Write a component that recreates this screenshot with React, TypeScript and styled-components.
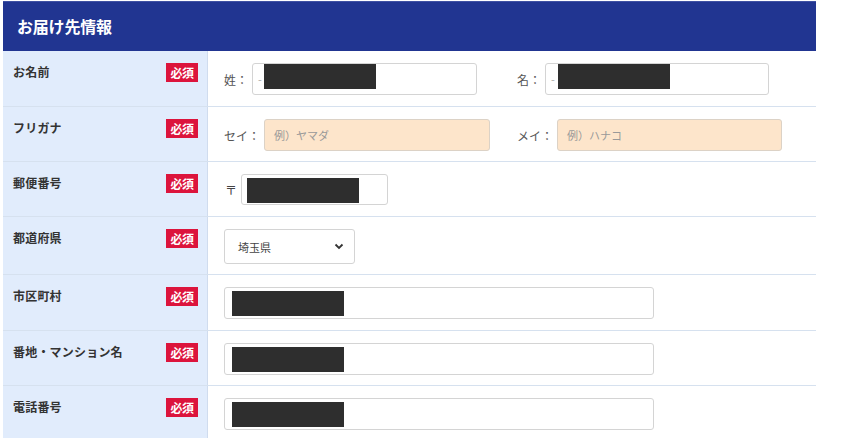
import * as React from 'react'
import styled, { createGlobalStyle } from 'styled-components'

const GlobalStyle = createGlobalStyle`
	body {
		margin: 0;
		background: #fff;
		font-family: 'Noto Sans CJK JP', 'Noto Sans', sans-serif;
		color: #333;
	}
`

type Row = {
	label: string
	height: number
	content: React.ReactNode
}

const Redacted = ({ left, top }: { left: number; top: number }) => (
	<RedactBox style={{ left, top }} />
)

function buildRows(): Row[] {
	return [
		{
			label: 'お名前',
			height: 56,
			content: (
				<>
					<Group>
						<FieldLabel>姓：</FieldLabel>
						<Field $width={225} $height={32}>
							<Ghost>-</Ghost>
							<Redacted left={11} top={0} />
						</Field>
					</Group>
					<Group>
						<FieldLabel>名：</FieldLabel>
						<Field $width={224} $height={32}>
							<Ghost>-</Ghost>
							<Redacted left={12} top={0} />
						</Field>
					</Group>
				</>
			),
		},
		{
			label: 'フリガナ',
			height: 55,
			content: (
				<>
					<Group>
						<FieldLabel>セイ：</FieldLabel>
						<Field $width={226} $height={32} $peach>
							<Placeholder>例）ヤマダ</Placeholder>
						</Field>
					</Group>
					<Group>
						<FieldLabel>メイ：</FieldLabel>
						<Field $width={225} $height={32} $peach>
							<Placeholder>例）ハナコ</Placeholder>
						</Field>
					</Group>
				</>
			),
		},
		{
			label: '郵便番号',
			height: 55,
			content: (
				<Group>
					<Postal>〒</Postal>
					<Field $width={147} $height={31}>
						<Redacted left={5} top={3} />
					</Field>
				</Group>
			),
		},
		{
			label: '都道府県',
			height: 58,
			content: (
				<Select>
					<span>埼玉県</span>
					<svg width="10" height="7" viewBox="0 0 10 7">
						<path d="M1.5 1.5 L5 5 L8.5 1.5" fill="none" stroke="#333" strokeWidth="1.8" />
					</svg>
				</Select>
			),
		},
		{
			label: '市区町村',
			height: 56,
			content: (
				<Field $width={430} $height={32}>
					<Redacted left={7} top={3} />
				</Field>
			),
		},
		{
			label: '番地・マンション名',
			height: 55,
			content: (
				<Field $width={430} $height={32}>
					<Redacted left={7} top={3} />
				</Field>
			),
		},
		{
			label: '電話番号',
			height: 56,
			content: (
				<Field $width={430} $height={32}>
					<Redacted left={7} top={3} />
				</Field>
			),
		},
	]
}

export default function App() {
	const rows = buildRows()
	return (
		<>
			<GlobalStyle />
			<Page>
				<Section>
					<Header>お届け先情報</Header>
					{rows.map((row) => (
						<FormRow key={row.label} $height={row.height}>
							<LabelCell>
								<LabelText>{row.label}</LabelText>
								<Badge>必須</Badge>
							</LabelCell>
							<InputCell>{row.content}</InputCell>
						</FormRow>
					))}
				</Section>
			</Page>
		</>
	)
}

const Page = styled.div`
	padding: 1px 0 0 3px;
	width: 856px;
	height: 437px;
	overflow: hidden;
`

const Section = styled.section`
	width: 813px;
`

const Header = styled.h2`
	margin: 0;
	height: 50px;
	padding: 0 0 2px 14px;
	display: flex;
	align-items: center;
	background: #213591;
	border-top: 1px solid #3f51a3;
	box-sizing: border-box;
	color: #fff;
	font-size: 16px;
	font-weight: 700;
	letter-spacing: -0.2px;
`

const FormRow = styled.div<{ $height: number }>`
	display: flex;
	height: ${(p) => p.$height}px;
	border-bottom: 1px solid #d6e1ef;
	box-sizing: border-box;
`

const LabelCell = styled.div`
	width: 205px;
	flex-shrink: 0;
	box-sizing: border-box;
	display: flex;
	justify-content: space-between;
	align-items: flex-start;
	padding: 12px 9px 0 10px;
	background: #e1ecfc;
	border-right: 1px solid #d0dcee;
`

const LabelText = styled.span`
	font-size: 12px;
	font-weight: 700;
	line-height: 17px;
	letter-spacing: 0.2px;
	color: #333;
`

const Badge = styled.span`
	width: 32px;
	height: 19px;
	display: flex;
	align-items: center;
	justify-content: center;
	background: #dc143c;
	color: #fff;
	font-size: 12px;
	font-weight: 700;
	letter-spacing: -0.5px;
`

const InputCell = styled.div`
	flex: 1;
	display: flex;
	align-items: flex-start;
	padding: 12px 0 0 16px;
`

const Group = styled.div`
	width: 293px;
	display: flex;
	align-items: center;
`

const FieldLabel = styled.span`
	font-size: 12px;
	color: #555;
	margin-right: 4px;
`

const Postal = styled.span`
	font-size: 12px;
	color: #444;
	margin: 0 4px 0 1px;
`

const Field = styled.div<{ $width: number; $height: number; $peach?: boolean }>`
	position: relative;
	width: ${(p) => p.$width}px;
	height: ${(p) => p.$height}px;
	box-sizing: border-box;
	display: flex;
	align-items: center;
	padding-left: 9px;
	background: ${(p) => (p.$peach ? '#fde5cb' : '#fff')};
	border: 1px solid ${(p) => (p.$peach ? '#dcd2c6' : '#d4d4d4')};
	border-radius: 3px;
`

const Placeholder = styled.span`
	font-size: 11px;
	color: #999;
`

const Ghost = styled.span`
	font-size: 11px;
	color: #aaa;
	margin-left: -4px;
`

const RedactBox = styled.span`
	position: absolute;
	width: 112px;
	height: 25px;
	background: #2e2e2e;
`

const Select = styled.div`
	width: 131px;
	height: 35px;
	box-sizing: border-box;
	display: flex;
	align-items: center;
	justify-content: space-between;
	padding: 0 10px 0 13px;
	background: #fff;
	border: 1px solid #d4d4d4;
	border-radius: 3px;
	font-size: 11px;
	color: #444;
`
